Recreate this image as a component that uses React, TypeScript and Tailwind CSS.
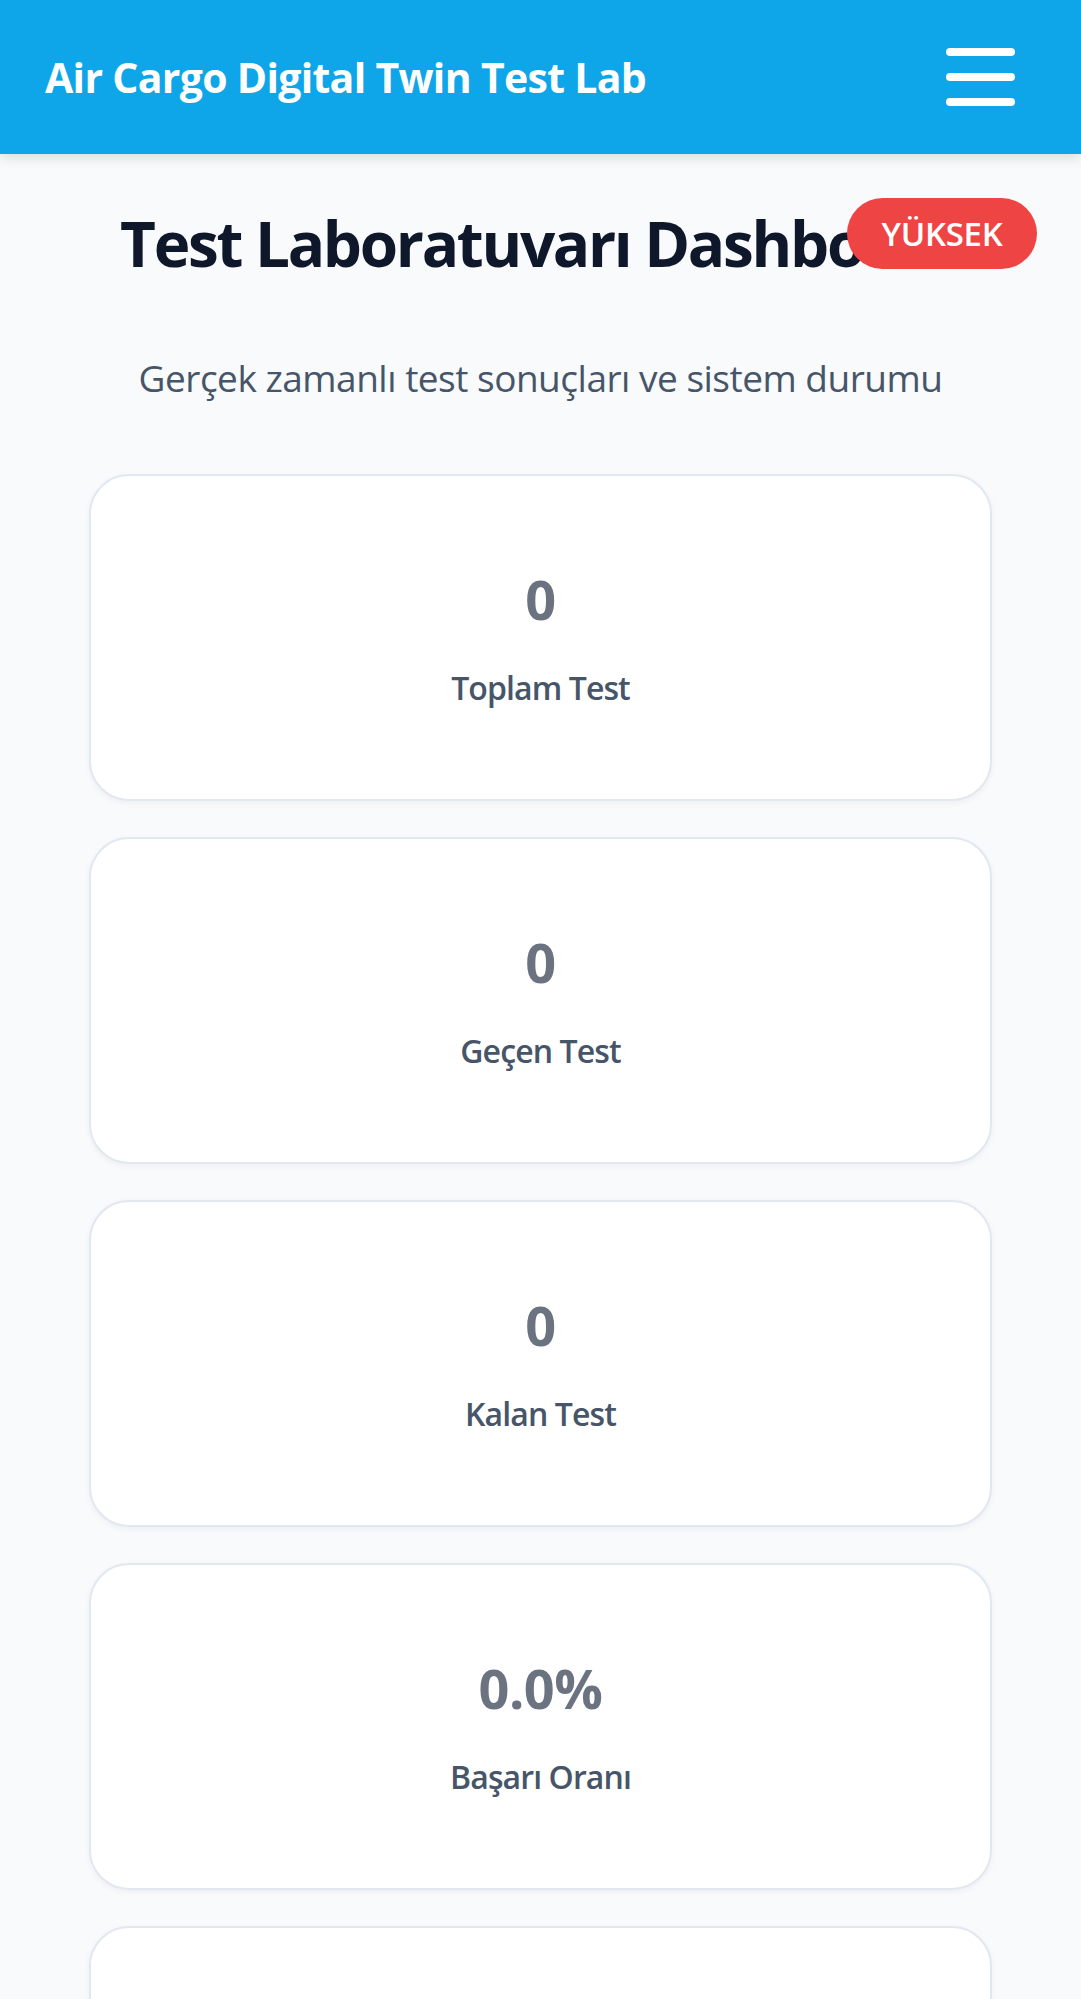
import React from "react";

const stats = [
  { value: "0", label: "Toplam Test" },
  { value: "0", label: "Geçen Test" },
  { value: "0", label: "Kalan Test" },
  { value: "0.0%", label: "Başarı Oranı" },
  { value: "0", label: "Başarısız Test" },
];

export default function App() {
  return (
    <div
      className="relative min-h-[1999px] bg-[#f8fafc] overflow-hidden"
      style={{ fontFamily: '"Open Sans", "Noto Sans", sans-serif' }}
    >
      <header className="relative z-10 flex h-[154px] items-center justify-between bg-[#0ea5e9] pl-[45px] pr-[66px] shadow-[0_4px_12px_rgba(0,0,0,0.12)]">
        <h1 className="text-[41px] leading-[56px] font-bold text-white tracking-[-0.7px]">
          Air Cargo Digital Twin Test Lab
        </h1>
        <button className="flex w-[69px] flex-col gap-[17px]" aria-label="Menu">
          <span className="block h-[8px] w-full rounded-full bg-white" />
          <span className="block h-[8px] w-full rounded-full bg-white" />
          <span className="block h-[8px] w-full rounded-full bg-white" />
        </button>
      </header>

      <div className="absolute top-[198px] right-[44px] z-20 flex h-[71px] w-[190px] items-center justify-center rounded-full bg-[#ef4444] text-[33px] font-semibold tracking-[-0.3px] text-white">
        YÜKSEK
      </div>

      <main className="px-[89px]">
        <h2 className="mt-[52px] text-center text-[62px] leading-[74px] font-bold text-[#0f172a] tracking-[-2.3px] whitespace-nowrap">
          Test Laboratuvarı Dashboard
        </h2>
        <p className="mt-[75px] text-center text-[37px] leading-[46px] tracking-[-0.5px] text-[#475569]">
          Gerçek zamanlı test sonuçları ve sistem durumu
        </p>

        <div className="mt-[73px] flex flex-col gap-[36px]">
          {stats.map((s) => (
            <div
              key={s.label}
              className="flex h-[327px] flex-col items-center justify-center gap-[37px] rounded-[40px] border-2 border-[#e2e8f0] bg-white shadow-[0_2px_6px_rgba(15,23,42,0.05)]"
            >
              <div className="text-[54px] leading-[64px] font-bold tracking-[-0.5px] text-[#6b7280]">
                {s.value}
              </div>
              <div className="text-[32px] leading-[40px] font-semibold tracking-[-0.9px] text-[#475569]">
                {s.label}
              </div>
            </div>
          ))}
        </div>
      </main>
    </div>
  );
}
